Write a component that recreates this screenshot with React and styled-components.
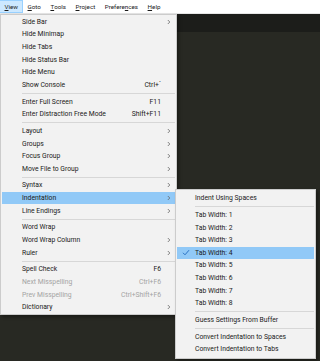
import React from "react";
import styled, { createGlobalStyle } from "styled-components";

const GlobalStyle = createGlobalStyle`
  html, body {
    margin: 0;
    padding: 0;
    background: #282923;
    overflow: hidden;
  }
  * { box-sizing: border-box; }
`;

const Page = styled.div`
  width: 320px;
  height: 361px;
  position: relative;
  font-family: Roboto, "Open Sans", sans-serif;
  font-size: 6.8px;
  color: #1a1a1a;
`;

const MenuBar = styled.div`
  height: 14px;
  background: #ffffff;
  display: flex;
  align-items: center;
  border-bottom: 1px solid #e6e6e6;
`;

const BarItem = styled.div`
  height: 13px;
  padding: 0 4px 0 4.5px;
  display: flex;
  align-items: center;
  font-size: 6.25px;
  background: ${(p) => (p.$active ? "#cce8ff" : "transparent")};
  border: 1px solid ${(p) => (p.$active ? "#99d1ff" : "transparent")};
  border-left: none;
  & u { text-decoration: underline; }
`;

const Workspace = styled.div`
  height: 347px;
  background: #282923;
`;

const TabStrip = styled.div`
  height: 18px;
  background: #1c1d1a;
`;

const Menu = styled.div`
  position: absolute;
  left: ${(p) => p.$left}px;
  top: ${(p) => p.$top}px;
  width: ${(p) => p.$width}px;
  background: #f2f2f2;
  border: 1px solid #cccccc;
  box-shadow: 2px 2px 3px rgba(0, 0, 0, 0.35);
  padding: ${(p) => p.$pad}px 1px;
`;

const Item = styled.div`
  height: 12.6px;
  display: grid;
  grid-template-columns: ${(p) => p.$indent}px 1fr auto 12px;
  align-items: center;
  color: ${(p) => (p.$disabled ? "#a3a3a3" : "#1a1a1a")};
  background: ${(p) => (p.$hot ? "#91c9f7" : "transparent")};
  white-space: nowrap;
`;

const Check = styled.span`
  display: flex;
  justify-content: center;
`;

const Shortcut = styled.span`
  text-align: right;
  padding-right: 2px;
`;

const Arrow = styled.span`
  display: flex;
  justify-content: center;
`;

const Separator = styled.div`
  height: 1px;
  margin: 1.6px 0 1.6px ${(p) => p.$indent}px;
  background: #d7d7d7;
`;

const Chevron = () => (
  <svg width="4" height="6" viewBox="0 0 4 6">
    <path d="M0.8 1 L2.8 3 L0.8 5" fill="none" stroke="#666" strokeWidth="0.8" />
  </svg>
);

const Tick = () => (
  <svg width="8" height="7" viewBox="0 0 8 7">
    <path d="M1 3.8 L3 5.8 L7 1.2" fill="none" stroke="#2a72c4" strokeWidth="1" />
  </svg>
);

const viewMenu = [
  { label: "Side Bar", sub: true },
  { label: "Hide Minimap" },
  { label: "Hide Tabs" },
  { label: "Hide Status Bar" },
  { label: "Hide Menu" },
  { label: "Show Console", key: "Ctrl+`" },
  "-",
  { label: "Enter Full Screen", key: "F11" },
  { label: "Enter Distraction Free Mode", key: "Shift+F11" },
  "-",
  { label: "Layout", sub: true },
  { label: "Groups", sub: true },
  { label: "Focus Group", sub: true },
  { label: "Move File to Group", sub: true },
  "-",
  { label: "Syntax", sub: true },
  { label: "Indentation", sub: true, hot: true },
  { label: "Line Endings", sub: true },
  "-",
  { label: "Word Wrap" },
  { label: "Word Wrap Column", sub: true },
  { label: "Ruler", sub: true },
  "-",
  { label: "Spell Check", key: "F6" },
  { label: "Next Misspelling", key: "Ctrl+F6", disabled: true },
  { label: "Prev Misspelling", key: "Ctrl+Shift+F6", disabled: true },
  { label: "Dictionary", sub: true },
];

const indentMenu = [
  { label: "Indent Using Spaces" },
  "-",
  { label: "Tab Width: 1" },
  { label: "Tab Width: 2" },
  { label: "Tab Width: 3" },
  { label: "Tab Width: 4", checked: true, hot: true },
  { label: "Tab Width: 5" },
  { label: "Tab Width: 6" },
  { label: "Tab Width: 7" },
  { label: "Tab Width: 8" },
  "-",
  { label: "Guess Settings From Buffer" },
  "-",
  { label: "Convert Indentation to Spaces" },
  { label: "Convert Indentation to Tabs" },
];

const MenuList = ({ items, indent }) =>
  items.map((it, i) =>
    it === "-" ? (
      <Separator key={i} $indent={indent} />
    ) : (
      <Item key={i} $indent={indent} $hot={it.hot} $disabled={it.disabled}>
        <Check>{it.checked && <Tick />}</Check>
        <span>{it.label}</span>
        <Shortcut>{it.key}</Shortcut>
        <Arrow>{it.sub && <Chevron />}</Arrow>
      </Item>
    )
  );

export default function App() {
  return (
    <Page>
      <GlobalStyle />
      <MenuBar>
        <BarItem $active>
          <u>V</u>iew
        </BarItem>
        <BarItem>
          <u>G</u>oto
        </BarItem>
        <BarItem>
          <u>T</u>ools
        </BarItem>
        <BarItem>
          <u>P</u>roject
        </BarItem>
        <BarItem>
          Prefere<u>n</u>ces
        </BarItem>
        <BarItem>
          <u>H</u>elp
        </BarItem>
      </MenuBar>
      <Workspace>
        <TabStrip />
      </Workspace>
      <Menu $left={0} $top={14} $width={177} $pad={0.5}>
        <MenuList items={viewMenu} indent={20} />
      </Menu>
      <Menu $left={175} $top={189} $width={141} $pad={2}>
        <MenuList items={indentMenu} indent={18} />
      </Menu>
    </Page>
  );
}
